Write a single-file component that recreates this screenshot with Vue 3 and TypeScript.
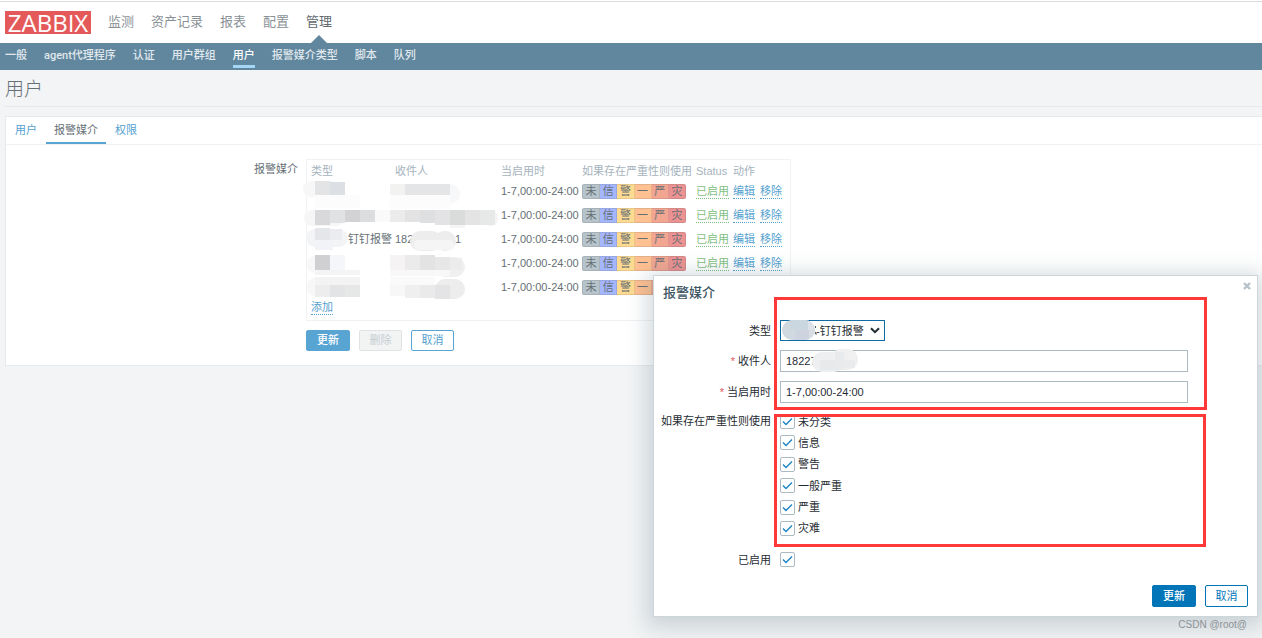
<script setup lang="ts">
import { ref } from 'vue'

interface MediaRow {
  type?: string
  start?: string
  end?: string
}
interface Block {
  x: number
  y: number
  w: number
  h: number
  c: string
  r?: number
}

const menu = ['监测', '资产记录', '报表', '配置', '管理']
const subMenu = ['一般', 'agent代理程序', '认证', '用户群组', '用户', '报警媒介类型', '脚本', '队列']
const tabs = ['用户', '报警媒介', '权限']
const columns = ['类型', '收件人', '当启用时', '如果存在严重性则使用', 'Status', '动作']
const rows: MediaRow[] = [{}, {}, { type: '钉钉报警', start: '182', end: '1' }, {}, {}]
const severities = [
  { short: '未', name: '未分类', color: '#b6c3ca' },
  { short: '信', name: '信息', color: '#a4b6ff' },
  { short: '警', name: '警告', color: '#ffdb91' },
  { short: '一', name: '一般严重', color: '#ffc092' },
  { short: '严', name: '严重', color: '#f2a692' },
  { short: '灾', name: '灾难', color: '#ed9292' },
]
const checked = ref(severities.map(() => true))
const enabled = ref(true)
const recipient = ref('18227')
const period = ref('1-7,00:00-24:00')

const blocks: Block[] = [
  { x: -3, y: 22, w: 36, h: 16, c: '#f7f7f7', r: 8 },
  { x: 9, y: 22, w: 15, h: 14, c: '#e2e4e5' },
  { x: 24, y: 23, w: 15, h: 13, c: '#dce0e4' },
  { x: 9, y: 36, w: 45, h: 13, c: '#fcfcfc' },
  { x: 130, y: 25, w: 24, h: 20, c: '#f7f8f9', r: 10 },
  { x: 84, y: 25, w: 15, h: 11, c: '#f2f2f1' },
  { x: 99, y: 25, w: 45, h: 11, c: '#e4e5e7' },
  { x: 84, y: 36, w: 60, h: 14, c: '#fcfcfc' },
  { x: -2, y: 51, w: 40, h: 16, c: '#f6f6f7', r: 8 },
  { x: 9, y: 51, w: 15, h: 15, c: '#d9d9dc' },
  { x: 24, y: 51, w: 15, h: 13, c: '#e1e2e4' },
  { x: 39, y: 51, w: 15, h: 12, c: '#d3d3d6' },
  { x: 54, y: 51, w: 15, h: 12, c: '#dcdddf' },
  { x: 69, y: 51, w: 15, h: 12, c: '#fafafa' },
  { x: 84, y: 51, w: 15, h: 12, c: '#ebebeb' },
  { x: 99, y: 51, w: 15, h: 12, c: '#e3e3e4' },
  { x: 114, y: 51, w: 15, h: 13, c: '#dedfe1' },
  { x: 129, y: 51, w: 15, h: 15, c: '#e3e3e5' },
  { x: 178, y: 51, w: 14, h: 16, c: '#f4f4f6', r: 7 },
  { x: 144, y: 51, w: 15, h: 15, c: '#dadcdb' },
  { x: 159, y: 51, w: 15, h: 15, c: '#e4e4e5' },
  { x: 174, y: 51, w: 15, h: 15, c: '#e7e9e8' },
  { x: 144, y: 66, w: 15, h: 3, c: '#f5f5f5' },
  { x: 0, y: 70, w: 42, h: 18, c: '#f3f4f6', r: 9 },
  { x: 9, y: 69, w: 15, h: 12, c: '#e5e6e9' },
  { x: 24, y: 70, w: 12, h: 11, c: '#ebecef' },
  { x: 9, y: 81, w: 18, h: 10, c: '#f2f3f6' },
  { x: 104, y: 72, w: 32, h: 20, c: '#ededee', r: 10 },
  { x: 128, y: 72, w: 22, h: 20, c: '#ededee', r: 10 },
  { x: 108, y: 81, w: 40, h: 10, c: '#f5f5f6', r: 5 },
  { x: 1, y: 97, w: 30, h: 17, c: '#f7f7f8', r: 8 },
  { x: 9, y: 96, w: 15, h: 15, c: '#d0d0d2' },
  { x: 24, y: 96, w: 15, h: 15, c: '#f5f6f9' },
  { x: 9, y: 111, w: 45, h: 5, c: '#f4f4f5' },
  { x: 129, y: 98, w: 30, h: 20, c: '#f0f0f1', r: 10 },
  { x: 84, y: 96, w: 15, h: 15, c: '#f5f3f3' },
  { x: 99, y: 96, w: 15, h: 15, c: '#ebebec' },
  { x: 114, y: 96, w: 15, h: 15, c: '#e3e3e4' },
  { x: 129, y: 98, w: 15, h: 13, c: '#e7e7e8' },
  { x: 144, y: 99, w: 12, h: 12, c: '#ececed' },
  { x: 84, y: 111, w: 60, h: 6, c: '#f8f8f9' },
  { x: 1, y: 119, w: 36, h: 18, c: '#f7f7f8', r: 8 },
  { x: 9, y: 118, w: 45, h: 8, c: '#f3f3f4' },
  { x: 9, y: 126, w: 15, h: 12, c: '#ededee' },
  { x: 24, y: 126, w: 15, h: 12, c: '#e3e4e6' },
  { x: 39, y: 126, w: 15, h: 12, c: '#e6e8e7' },
  { x: 129, y: 120, w: 30, h: 20, c: '#ededee', r: 10 },
  { x: 84, y: 118, w: 45, h: 8, c: '#fafafa' },
  { x: 84, y: 126, w: 15, h: 11, c: '#f7f7f8' },
  { x: 99, y: 126, w: 15, h: 13, c: '#efeff0' },
  { x: 114, y: 126, w: 15, h: 13, c: '#eaeaeb' },
  { x: 129, y: 126, w: 15, h: 14, c: '#e4e4e6' },
]
</script>

<template>
  <div class="page">
    <header class="top">
      <a href="#" class="logo">ZABBIX</a>
      <nav class="menu">
        <a v-for="m in menu" :key="m" href="#" :class="{ active: m === '管理' }">{{ m }}</a>
      </nav>
    </header>
    <nav class="submenu">
      <a v-for="m in subMenu" :key="m" href="#" :class="{ active: m === '用户' }">{{ m }}</a>
    </nav>

    <main>
      <h1>用户</h1>
      <section class="panel">
        <nav class="tabs">
          <a v-for="t in tabs" :key="t" href="#" :class="{ active: t === '报警媒介' }">{{ t }}</a>
        </nav>
        <div class="content">
          <div class="content-label">报警媒介</div>
          <div>
            <div class="box">
              <table>
                <thead>
                  <tr><th v-for="c in columns" :key="c">{{ c }}</th></tr>
                </thead>
                <tbody>
                  <tr v-for="(r, i) in rows" :key="i">
                    <td><span class="type">{{ r.type }}</span></td>
                    <td><span class="start">{{ r.start }}</span><span>{{ r.end }}</span></td>
                    <td>1-7,00:00-24:00</td>
                    <td>
                      <div class="sev">
                        <span v-for="s in severities" :key="s.short" :style="{ background: s.color }">{{ s.short }}</span>
                      </div>
                    </td>
                    <td><a href="#" class="dotted green">已启用</a></td>
                    <td class="actions"><a href="#" class="dotted">编辑</a><a href="#" class="dotted">移除</a></td>
                  </tr>
                </tbody>
                <tfoot>
                  <tr><td colspan="6"><a href="#" class="dotted">添加</a></td></tr>
                </tfoot>
              </table>
              <svg class="mosaic" width="200" height="150" aria-hidden="true">
                <rect v-for="(b, i) in blocks" :key="i" :x="b.x" :y="b.y" :width="b.w" :height="b.h" :rx="b.r ?? 0" :fill="b.c" />
              </svg>
            </div>
            <div class="buttons">
              <button type="button" class="btn soft-primary">更新</button>
              <button type="button" class="btn disabled" disabled>删除</button>
              <button type="button" class="btn">取消</button>
            </div>
          </div>
        </div>
      </section>
    </main>

    <form class="dialog" role="dialog" aria-labelledby="dlg-title" @submit.prevent>
      <button type="button" class="close" aria-label="Close">
        <svg width="8" height="8" viewBox="0 0 8 8"><path d="M1 1L7 7M7 1L1 7" stroke="#b5c2c9" stroke-width="2.4" /></svg>
      </button>
      <h2 id="dlg-title">报警媒介</h2>
      <div class="row">
        <label for="type">类型</label>
        <div class="field select">
          <select id="type"><option>-钉钉报警</option></select>
          <svg class="chevron" width="10" height="7" viewBox="0 0 10 7"><path d="M1 1.2L5 5.2L9 1.2" fill="none" stroke="#1f2c33" stroke-width="2" /></svg>
          <svg class="smudge" width="40" height="20" viewBox="0 0 40 20">
            <defs><clipPath id="oval"><rect x="1" y="0" width="33" height="20" rx="10" /></clipPath></defs>
            <g clip-path="url(#oval)">
              <rect width="40" height="20" fill="#d0d9e0" />
              <rect x="9" width="18" height="10" fill="#cbd7e0" />
              <rect x="27" width="10" height="10" fill="#dce2e8" />
              <rect x="14" y="10" width="14" height="10" fill="#cdd4df" />
              <rect x="28" y="10" width="10" height="10" fill="#d9dce3" />
            </g>
            <path d="M34.500 6V8M34.500 12V14H36" fill="none" stroke="#52606a" />
          </svg>
        </div>
      </div>
      <div class="row">
        <label for="to"><i>*</i> 收件人</label>
        <div class="field">
          <input id="to" v-model="recipient" type="text" />
          <svg class="smudge phone" width="50" height="24" viewBox="0 0 50 24">
            <rect x="1" y="3" width="32" height="20" rx="10" fill="#eeeff0" />
            <rect x="20" y="0" width="27" height="21" rx="10" fill="#f0f0f1" />
            <rect x="9" y="11" width="15" height="10" fill="#e8e9eb" />
            <rect x="24" y="3" width="9" height="18" fill="#e9eaeb" />
            <rect x="33" y="11" width="11" height="8" fill="#eaebec" />
          </svg>
        </div>
      </div>
      <div class="row">
        <label for="period"><i>*</i> 当启用时</label>
        <div class="field"><input id="period" v-model="period" type="text" /></div>
      </div>
      <div class="row top-row" role="group" aria-labelledby="sev-label">
        <span id="sev-label" class="label">如果存在严重性则使用</span>
        <div class="checks">
          <label v-for="(s, i) in severities" :key="s.name" class="check">
            <input v-model="checked[i]" type="checkbox" />
            <svg width="11" height="9" viewBox="0 0 11 9"><path d="M1 4.500L4 7.500L10 1.500" /></svg>
            {{ s.name }}
          </label>
        </div>
      </div>
      <div class="row last">
        <label for="enabled">已启用</label>
        <div class="check">
          <input id="enabled" v-model="enabled" type="checkbox" />
          <svg width="11" height="9" viewBox="0 0 11 9"><path d="M1 4.500L4 7.500L10 1.500" /></svg>
        </div>
      </div>
      <div class="footer">
        <button type="submit" class="btn primary">更新</button>
        <button type="button" class="btn">取消</button>
      </div>
      <div class="mark mark-a"></div>
      <div class="mark mark-b"></div>
    </form>
    <div class="watermark">CSDN @root@</div>
  </div>
</template>

<style>
body {
  background: #f2f4f5;
}
</style>

<style scoped>
.page {
  position: relative;
  min-height: 100vh;
  box-sizing: border-box;
  overflow: hidden;
  border-top: 1px solid #fff;
  background: #f2f4f5;
  color: #666f75;
  font: 11px/14px "Liberation Sans", "Noto Sans CJK SC", sans-serif;
}
.page * {
  box-sizing: border-box;
}
a {
  color: #54a1cf;
  text-decoration: none;
}
.top {
  display: flex;
  align-items: center;
  gap: 17px;
  height: 42px;
  padding-left: 5px;
  border-top: 1px solid #d9dddd;
  background: #fff;
}
.logo {
  width: 86px;
  height: 23px;
  background: #e45959;
  color: #fff;
  font-family: "Open Sans", sans-serif;
  font-size: 24px;
  line-height: 23px;
  text-align: center;
}
.menu {
  display: flex;
  gap: 17px;
  align-self: stretch;
}
.menu a {
  position: relative;
  color: #8a9196;
  font-size: 13px;
  line-height: 40px;
}
.menu .active {
  color: #62696e;
}
.menu .active::after {
  content: "";
  position: absolute;
  bottom: 0;
  left: 5px;
  border: 8px solid transparent;
  border-top: 0;
  border-bottom-color: #61879e;
}
.submenu {
  display: flex;
  gap: 17px;
  height: 27px;
  padding: 4px 5px 0;
  background: #61879e;
  font-family: Roboto, "Noto Sans CJK SC", sans-serif;
}
.submenu a {
  height: 21px;
  color: #e0e8ed;
  font-weight: 500;
  line-height: 17px;
}
.submenu .active {
  border-bottom: 3px solid #a5d7f5;
  color: #fff;
}
main {
  padding-left: 5px;
}
h1 {
  margin: 0 0 9px;
  padding: 8px 0 5px;
  border-bottom: 1px solid #e7eaec;
  color: #666f75;
  font-size: 19px;
  font-weight: 300;
  line-height: 23px;
}
.panel {
  border: 1px solid #e7eaec;
  border-right: 0;
  background: #fff;
}
.tabs {
  display: flex;
  height: 28px;
  border-bottom: 1px solid #f0f2f3;
}
.tabs a {
  height: 27px;
  padding: 0 9px;
  line-height: 26px;
}
.tabs .active {
  padding: 0 8px;
  border-bottom: 2px solid #58a4d3;
  color: #666f75;
}
.content {
  display: flex;
  gap: 8px;
  padding: 14px 0;
}
.content-label {
  width: 292px;
  padding-top: 3px;
  text-align: right;
}
.box {
  position: relative;
  padding: 3px 4px 5px;
  border: 1px solid #f0f2f3;
}
table {
  border-spacing: 0;
}
th,
td {
  height: 24px;
  padding: 0 3px 0 0;
  text-align: left;
  white-space: nowrap;
}
th {
  height: 16px;
  color: #a5b3bc;
  font-weight: 400;
}
tfoot td {
  height: 16px;
}
th:nth-child(1) {
  width: 84px;
}
th:nth-child(2) {
  width: 106px;
}
th:nth-child(3) {
  width: 81px;
}
th:nth-child(4) {
  width: 114px;
}
th:nth-child(5) {
  width: 37px;
}
th:nth-child(6) {
  width: 53px;
}
.type {
  padding-left: 37px;
}
.start {
  display: inline-block;
  width: 60px;
}
.actions a + a {
  margin-left: 5px;
}
.dotted {
  display: inline-block;
  line-height: 14px;
  border-bottom: 1px dotted #54a1cf;
}
.green {
  border-color: #7fbe82;
  color: #7fbe82;
}
.sev {
  display: flex;
  width: 104px;
}
.sev span {
  flex: 1;
  height: 15px;
  border: 1px solid rgba(80, 80, 80, 0.15);
  border-left-width: 0;
  line-height: 13px;
  text-align: center;
}
.sev span:first-child {
  border-left-width: 1px;
  border-radius: 2px 0 0 2px;
}
.sev span:last-child {
  border-radius: 0 2px 2px 0;
}
.mosaic {
  position: absolute;
  top: -1px;
  left: -1px;
  overflow: visible;
}
.buttons {
  display: flex;
  gap: 9px;
  padding-top: 9px;
}
.btn {
  min-width: 43px;
  height: 21px;
  padding: 0 8px;
  border: 1px solid #58a4d3;
  border-radius: 2px;
  background: #fff;
  color: #54a1cf;
  font: inherit;
  line-height: 19px;
}
.soft-primary {
  min-width: 44px;
  background: #58a4d3;
  color: #fff;
  font-weight: 500;
}
.disabled {
  border-color: #dfe3e5;
  background: #f2f3f3;
  color: #c5ced3;
}
.dialog {
  position: absolute;
  top: 274px;
  right: 4px;
  width: 605px;
  padding: 8px 9px 9px 7px;
  border: 1px solid #ccd5d9;
  background: #fff;
  box-shadow: 0 4px 20px 6px rgba(60, 90, 105, 0.22);
  color: #1f2c33;
}
.close {
  position: absolute;
  top: 6px;
  right: 6px;
  display: flex;
  padding: 0;
  border: 0;
  background: none;
}
h2 {
  margin: 0 0 18px;
  padding-left: 2px;
  color: #3c5563;
  font-size: 13px;
  font-weight: 500;
  line-height: 18px;
}
.row {
  display: flex;
  align-items: center;
  gap: 9px;
  margin-bottom: 9px;
}
.row > label,
.label {
  width: 110px;
  flex: none;
  text-align: right;
  white-space: nowrap;
}
.row i {
  color: #e45959;
  font-style: normal;
}
.field {
  position: relative;
  width: 408px;
}
.field input {
  display: block;
  width: 100%;
  height: 22px;
  padding: 0 5px;
  border: 1px solid #acbbc2;
  background: #fff;
  color: #1f2c33;
  font: inherit;
}
.field.select {
  width: 105px;
}
select {
  display: block;
  width: 100%;
  height: 21px;
  padding: 0 0 0 35px;
  border: 1px solid #0f6ca3;
  border-radius: 0;
  appearance: none;
  background: #fff;
  color: #1f2c33;
  font: inherit;
}
.chevron {
  position: absolute;
  top: 7px;
  right: 5px;
}
.smudge {
  position: absolute;
  top: 0;
  left: 1px;
}
.phone {
  top: -1px;
  left: 31px;
}
.top-row {
  align-items: flex-start;
  padding-top: 2px;
}
.checks {
  display: flex;
  flex-direction: column;
  justify-content: space-between;
  height: 122px;
}
.check {
  position: relative;
  display: flex;
  align-items: center;
  gap: 3px;
  height: 15px;
}
.check input {
  width: 15px;
  height: 15px;
  margin: 0;
  appearance: none;
  border: 1px solid #acbbc2;
  border-radius: 2px;
  background: #fff;
}
.check svg {
  position: absolute;
  top: 3px;
  left: 2px;
  fill: none;
  stroke: #1d84c4;
  stroke-width: 1.4;
  visibility: hidden;
}
.check input:checked + svg {
  visibility: visible;
}
.last {
  padding-top: 7px;
}
.footer {
  display: flex;
  justify-content: flex-end;
  gap: 9px;
  padding-top: 9px;
}
.footer .btn {
  height: 22px;
  border-color: #0275b8;
  color: #0275b8;
}
.footer .primary {
  min-width: 44px;
  background: #0275b8;
  color: #fff;
  font-weight: 500;
}
.mark {
  position: absolute;
  left: 120px;
  border: 3px solid #ff3838;
  pointer-events: none;
}
.mark-a {
  top: 21px;
  right: 50px;
  height: 113px;
}
.mark-b {
  top: 138px;
  right: 51px;
  height: 133px;
}
.watermark {
  position: absolute;
  right: 15px;
  bottom: 6px;
  color: #8d9296;
  font-size: 10px;
}
</style>
